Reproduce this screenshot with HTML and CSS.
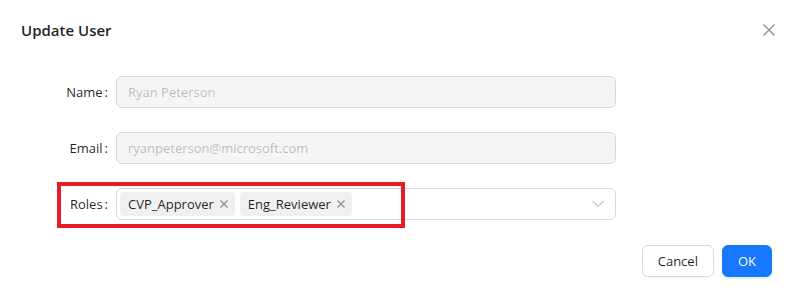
FILE: index.html
```html
<!DOCTYPE html>
<html lang="en">
<head>
    <meta charset="UTF-8">
    <meta name="viewport" content="width=device-width, initial-scale=1.0">
    <title>Update User</title>
    <link rel="stylesheet" href="styles.css">
</head>
<body>
    <div class="modal">
        <header class="modal-header">
            <h1>Update User</h1>
            <button class="modal-close" aria-label="Close">
                <svg width="12" height="12" viewBox="0 0 12 12"><path d="M0.5 0.5 L11.5 11.5 M11.5 0.5 L0.5 11.5" stroke="#8c8c8c" stroke-width="1.2" fill="none"/></svg>
            </button>
        </header>
        <form class="form">
            <div class="form-row">
                <label class="form-label">Name</label>
                <div class="input disabled">Ryan Peterson</div>
            </div>
            <div class="form-row">
                <label class="form-label">Email</label>
                <div class="input disabled">ryanpeterson@microsoft.com</div>
            </div>
            <div class="form-row">
                <label class="form-label">Roles</label>
                <div class="input select">
                    <span class="tag">CVP_Approver
                        <svg width="8" height="8" viewBox="0 0 8 8"><path d="M0.5 0.5 L7.5 7.5 M7.5 0.5 L0.5 7.5" stroke="#8c8c8c" stroke-width="1.1" fill="none"/></svg>
                    </span>
                    <span class="tag">Eng_Reviewer
                        <svg width="8" height="8" viewBox="0 0 8 8"><path d="M0.5 0.5 L7.5 7.5 M7.5 0.5 L0.5 7.5" stroke="#8c8c8c" stroke-width="1.1" fill="none"/></svg>
                    </span>
                    <svg class="arrow" width="12" height="8" viewBox="0 0 12 8"><path d="M0.5 1 L6 6.5 L11.5 1" stroke="#c4c4c4" stroke-width="1.1" fill="none"/></svg>
                </div>
                <div class="highlight"></div>
            </div>
        </form>
        <footer class="modal-footer">
            <button class="btn">Cancel</button>
            <button class="btn primary">OK</button>
        </footer>
    </div>
</body>
</html>
```

FILE: styles.css
```css
body {
    margin: 0;
    background-color: #fff;
    font-family: "Segoe UI", "Open Sans", sans-serif;
    font-size: 13px;
    color: rgba(0, 0, 0, 0.88);
}
.modal {
    width: 795px;
    height: 292px;
    box-sizing: border-box;
    padding: 18px 23px 0 21px;
}
.modal-header {
    display: flex;
    justify-content: space-between;
    align-items: center;
    height: 24px;
}
h1 {
    margin: 0;
    font-size: 15px;
    font-weight: 600;
    line-height: 24px;
}
.modal-close {
    border: none;
    background: none;
    padding: 0;
    margin-right: -3px;
    width: 12px;
    height: 12px;
    display: flex;
}
.form {
    margin-top: 34px;
    display: flex;
    flex-direction: column;
    gap: 24px;
}
.form-row {
    display: flex;
    align-items: center;
    position: relative;
    height: 32px;
}
.form-label {
    width: 95px;
    text-align: right;
    box-sizing: border-box;
}
.form-label::after {
    content: ":";
    margin: 0 8px 0 2px;
}
.input {
    width: 500px;
    height: 32px;
    box-sizing: border-box;
    border: 1px solid #d9d9d9;
    border-radius: 6px;
    padding: 0 11px;
    display: flex;
    align-items: center;
}
.input.disabled {
    background-color: #f5f5f5;
    color: rgba(0, 0, 0, 0.25);
}
.input.select {
    padding: 0 11px 0 3px;
    gap: 5px;
}
.tag {
    display: inline-flex;
    align-items: center;
    height: 24px;
    padding: 0 7px 0 8px;
    gap: 6px;
    background-color: #f0f0f0;
    border-radius: 4px;
    box-sizing: border-box;
}
.arrow {
    margin-left: auto;
}
.highlight {
    position: absolute;
    left: 36px;
    top: -6px;
    width: 348px;
    height: 46px;
    box-sizing: border-box;
    border: 4px solid #e81c24;
}
.modal-footer {
    margin-top: 25px;
    display: flex;
    justify-content: flex-end;
    gap: 8px;
}
.btn {
    font-family: inherit;
    font-size: 13px;
    height: 32px;
    padding: 4px 15px;
    border: 1px solid #d9d9d9;
    border-radius: 6px;
    background-color: #fff;
    color: rgba(0, 0, 0, 0.88);
    box-shadow: 0 2px 0 rgba(0, 0, 0, 0.02);
}
.btn.primary {
    background-color: #1677ff;
    border-color: #1677ff;
    color: #fff;
    box-shadow: 0 2px 0 rgba(5, 145, 255, 0.1);
}
```
